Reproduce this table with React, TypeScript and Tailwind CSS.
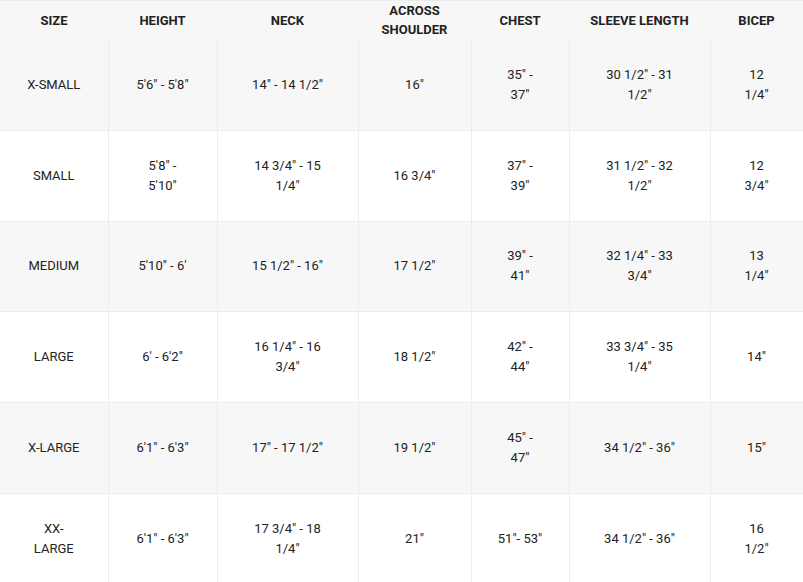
import * as React from "react";

const columns = [
    { title: ["SIZE"], width: "w-[108px]" },
    { title: ["HEIGHT"], width: "w-[109px]" },
    { title: ["NECK"], width: "w-[141px]" },
    { title: ["ACROSS", "SHOULDER"], width: "w-[113px]" },
    { title: ["CHEST"], width: "w-[98px]" },
    { title: ["SLEEVE LENGTH"], width: "w-[141px]" },
    { title: ["BICEP"], width: "w-[93px]" },
];

// each cell is a list of lines, wrapped the way the source page wraps them
const rows: string[][][] = [
    [["X-SMALL"], ["5'6\" - 5'8\""], ["14\" - 14 1/2\""], ["16\""], ["35\" -", "37\""], ["30 1/2\" - 31", "1/2\""], ["12", "1/4\""]],
    [["SMALL"], ["5'8\" -", "5'10\""], ["14 3/4\" - 15", "1/4\""], ["16 3/4\""], ["37\" -", "39\""], ["31 1/2\" - 32", "1/2\""], ["12", "3/4\""]],
    [["MEDIUM"], ["5'10\" - 6'"], ["15 1/2\" - 16\""], ["17 1/2\""], ["39\" -", "41\""], ["32 1/4\" - 33", "3/4\""], ["13", "1/4\""]],
    [["LARGE"], ["6' - 6'2\""], ["16 1/4\" - 16", "3/4\""], ["18 1/2\""], ["42\" -", "44\""], ["33 3/4\" - 35", "1/4\""], ["14\""]],
    [["X-LARGE"], ["6'1\" - 6'3\""], ["17\" - 17 1/2\""], ["19 1/2\""], ["45\" -", "47\""], ["34 1/2\" - 36\""], ["15\""]],
    [["XX-", "LARGE"], ["6'1\" - 6'3\""], ["17 3/4\" - 18", "1/4\""], ["21\""], ["51\"- 53\""], ["34 1/2\" - 36\""], ["16", "1/2\""]],
];

function Lines({ lines }: { lines: string[] }) {
    return (
        <>
            {lines.map((l, i) => (
                <div key={i}>{l}</div>
            ))}
        </>
    );
}

export default function App() {
    return (
        <div className="w-[803px] h-[582px] overflow-hidden bg-white font-['Roboto',sans-serif] text-[13px] leading-[20px] text-[#222]">
            <table className="w-[803px] table-fixed border-collapse border-t border-[#ececec]">
                <colgroup>
                    {columns.map((c, i) => (
                        <col key={i} className={c.width} />
                    ))}
                </colgroup>
                <thead>
                    <tr className="h-[39px] bg-[#f7f7f7]">
                        {columns.map((c, i) => (
                            <th key={i} className="p-0 text-center align-middle font-bold text-[13px] leading-[19px] text-[#222]">
                                <Lines lines={c.title} />
                            </th>
                        ))}
                    </tr>
                </thead>
                <tbody>
                    {rows.map((r, ri) => (
                        <tr
                            key={ri}
                            className={`h-[90.75px] border-b border-[#ececec] ${ri % 2 === 0 ? "bg-[#f7f7f7]" : "bg-white"}`}
                        >
                            {r.map((cell, ci) => (
                                <td
                                    key={ci}
                                    className={`p-0 text-center align-middle border-r border-[#ececec] ${ci === 0 ? "" : "border-l"}`}
                                >
                                    <Lines lines={cell} />
                                </td>
                            ))}
                        </tr>
                    ))}
                </tbody>
            </table>
        </div>
    );
}
